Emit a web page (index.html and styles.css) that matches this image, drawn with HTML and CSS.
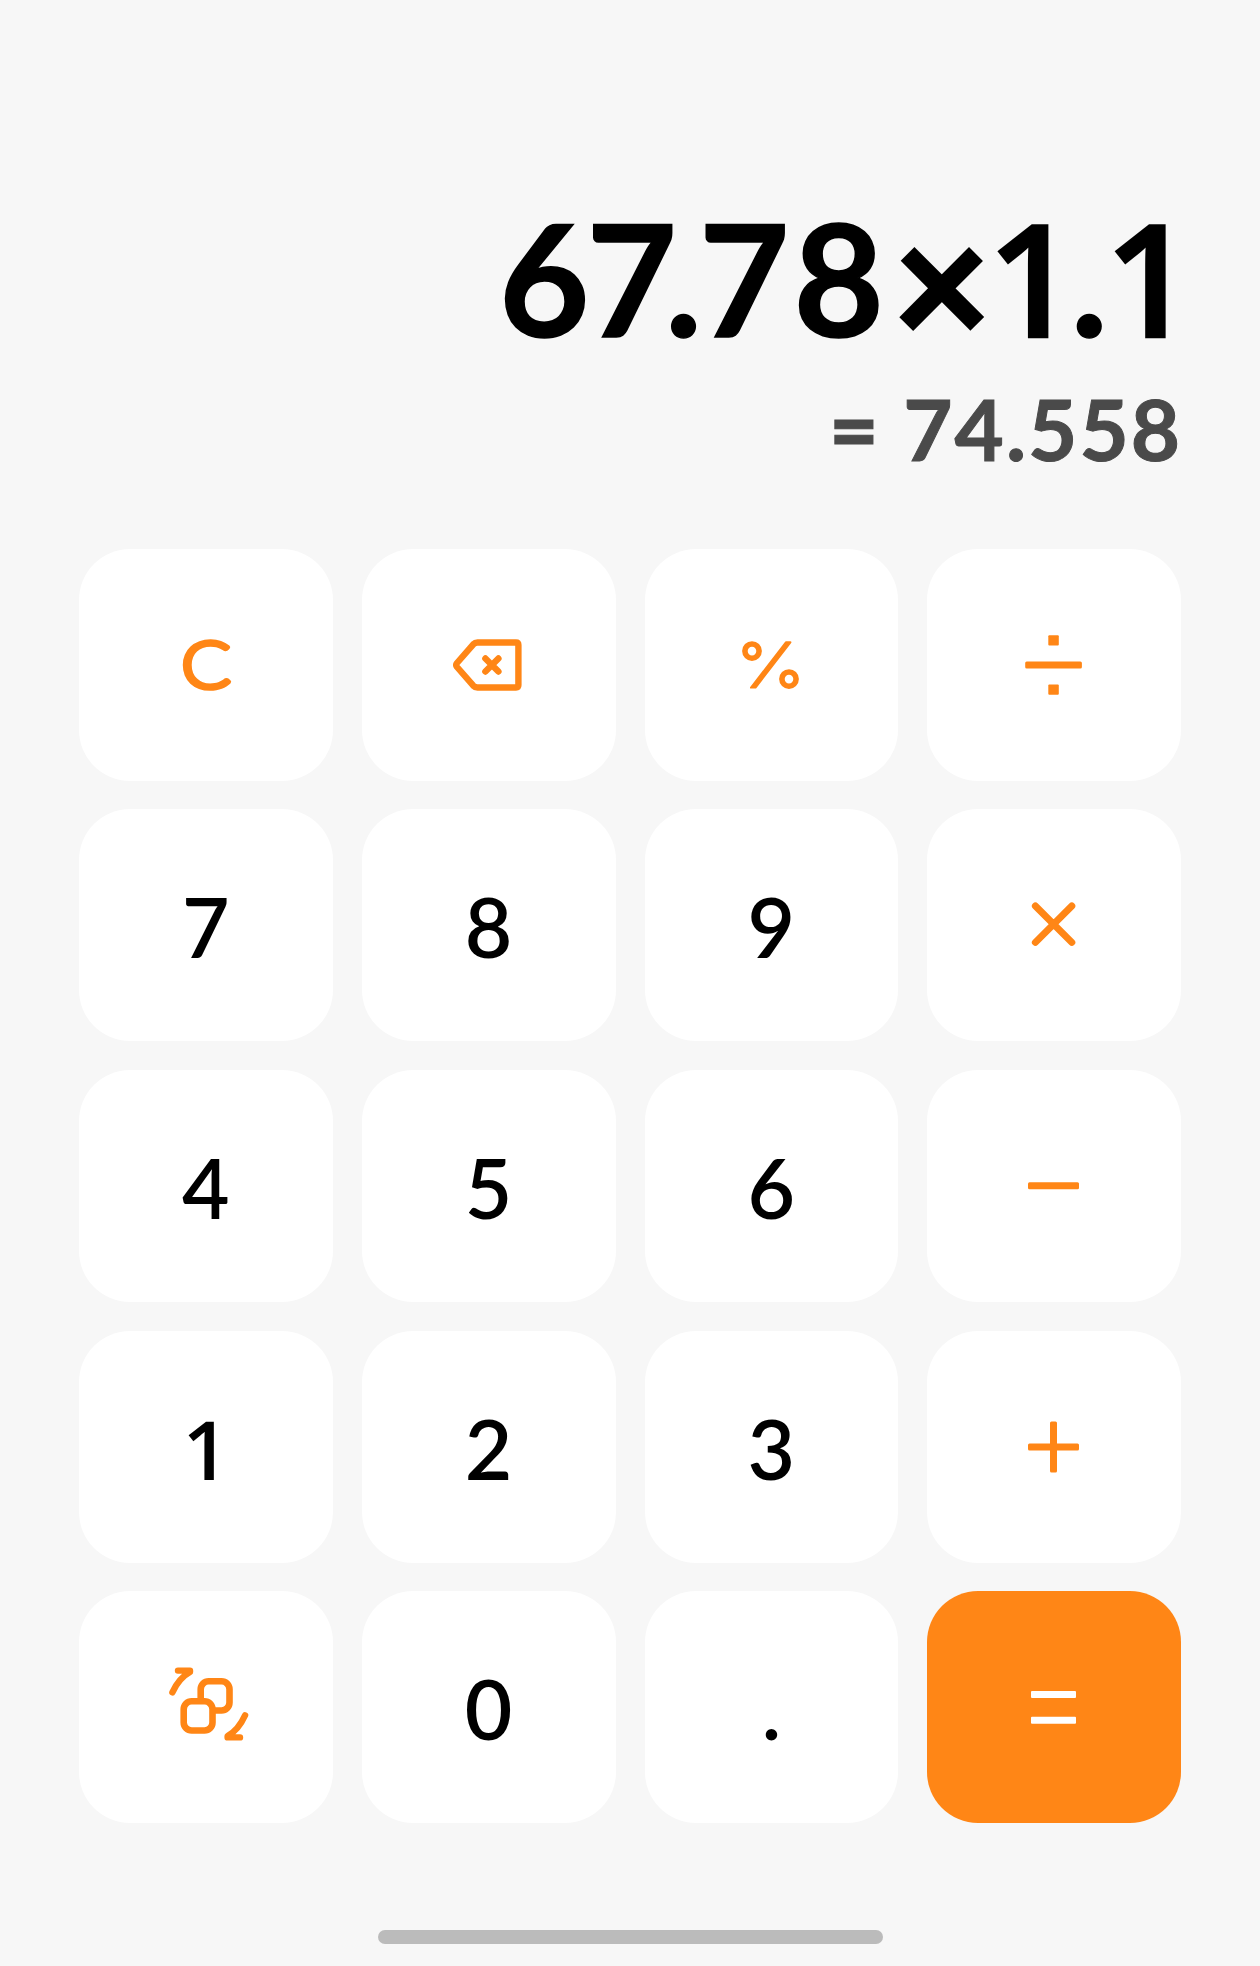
FILE: index.html
```html
<!DOCTYPE html>
<html lang="en">
<head>
    <meta charset="UTF-8">
    <meta name="viewport" content="width=device-width, initial-scale=1.0">
    <title>Calculator</title>
    <link rel="stylesheet" href="styles.css">
</head>
<body>
    <div class="calculator">
        <div class="display">
            <div class="expression">6<span class="tight">7</span>.<span class="loose">7</span>8<span class="times">×</span><span class="one">1</span>.<span class="one">1</span></div>
            <div class="result"><span class="equals">=</span> 74.558</div>
        </div>

        <div class="keypad">
            <button class="key" aria-label="Clear">
                <svg class="icon" viewBox="0 0 120 120">
                    <text class="clear" x="35" y="83" textLength="50" lengthAdjust="spacingAndGlyphs">C</text>
                </svg>
            </button>
            <button class="key" aria-label="Backspace">
                <svg class="icon line" viewBox="0 0 120 120">
                    <path d="M28 58L44.3 39.3Q46 37.5 48.5 37.5H87Q89.4 37.5 89.4 40V80Q89.4 82.5 87 82.5H48.5Q46 82.5 44.3 80.7L28 62Q26.4 60 28 58Z"/>
                    <path d="M56.4 53.5l13 13M69.4 53.5l-13 13"/>
                </svg>
            </button>
            <button class="key" aria-label="Percent">
                <svg class="icon" viewBox="0 0 120 120">
                    <circle class="ring" cx="41" cy="46.1" r="7.1"/>
                    <circle class="ring" cx="78" cy="74.1" r="7.1"/>
                    <path class="slash" d="M40 82.6H44.5L79.4 37.3H74.9Z"/>
                </svg>
            </button>
            <button class="key" aria-label="Divide">
                <svg class="icon" viewBox="0 0 120 120">
                    <rect x="54.3" y="30.2" width="10.5" height="10.3" rx="1"/>
                    <rect x="31.2" y="56.5" width="56.7" height="7" rx="1.5"/>
                    <rect x="54.3" y="79.5" width="10.5" height="10.3" rx="1"/>
                </svg>
            </button>

            <button class="key">7</button>
            <button class="key">8</button>
            <button class="key">9</button>
            <button class="key" aria-label="Multiply">
                <svg class="icon line thick" viewBox="0 0 120 120">
                    <path d="M41.4 41l36.4 36.4M77.8 41L41.4 77.4"/>
                </svg>
            </button>

            <button class="key">4</button>
            <button class="key">5</button>
            <button class="key">6</button>
            <button class="key" aria-label="Subtract">
                <svg class="icon" viewBox="0 0 120 120">
                    <rect x="34" y="56.2" width="51" height="7" rx="1.5"/>
                </svg>
            </button>

            <button class="key"><span class="one">1</span></button>
            <button class="key">2</button>
            <button class="key">3</button>
            <button class="key" aria-label="Add">
                <svg class="icon" viewBox="0 0 120 120">
                    <rect x="34" y="56.4" width="51" height="7" rx="1.5"/>
                    <rect x="56" y="34.4" width="7" height="51" rx="1.5"/>
                </svg>
            </button>

            <button class="key" aria-label="Convert">
                <svg class="icon line" viewBox="0 0 120 120">
                    <path d="M26.4 45.3Q33 31 44 25V23.6H32"/>
                    <rect class="tile" x="54.7" y="34.3" width="28.8" height="29.2" rx="8"/>
                    <rect class="tile" x="37.7" y="54.3" width="28.8" height="29.2" rx="8"/>
                    <path d="M99.1 68.3Q92.5 83 81.6 89V90.4H94"/>
                </svg>
            </button>
            <button class="key">0</button>
            <button class="key">.</button>
            <button class="key key-equals" aria-label="Equals">
                <svg class="icon" viewBox="0 0 120 120">
                    <rect x="37" y="44" width="45" height="7" rx="1"/>
                    <rect x="37" y="69.7" width="45" height="7" rx="1"/>
                </svg>
            </button>
        </div>

        <div class="home-bar"></div>
    </div>
</body>
</html>
```
FILE: styles.css
```css
body {
    font-family: Lato, "Open Sans", sans-serif;
    margin: 0;
    background-color: #f7f7f7;
    color: #000;
}

.calculator {
    box-sizing: border-box;
    width: 1260px;
    height: 1966px;
    padding: 0 79px 22px;
    display: flex;
    flex-direction: column;
}

.display {
    box-sizing: border-box;
    height: 548.5px;
    padding-top: 183px;
    text-align: right;
    white-space: nowrap;
}

.expression {
    height: 188px;
    font-size: 156px;
    font-weight: 700;
    line-height: 188px;
    letter-spacing: -3px;
    margin-right: -7px;
    -webkit-text-stroke: 1.5px #000;
}

.expression .one {
    letter-spacing: -6px;
    -webkit-text-stroke: 2.5px #000;
}

.tight {
    letter-spacing: -12px;
}

.loose {
    letter-spacing: 4px;
}

.times {
    font-size: 168px;
    line-height: 1;
    margin: 0 0 0 12px;
    vertical-align: -8px;
    -webkit-text-stroke: 4px #000;
}

.result {
    font-size: 85px;
    font-weight: 700;
    line-height: 102px;
    letter-spacing: 2px;
    margin-top: 6px;
    margin-right: -1px;
    color: #4a4a4a;
    -webkit-text-stroke: 1px #4a4a4a;
}

.equals {
    font-weight: 900;
}

/* plain figure one, without a foot */
.one {
    font-family: "Open Sans", sans-serif;
    font-weight: 600;
}

.keypad {
    display: grid;
    grid-template-columns: repeat(4, 1fr);
    grid-auto-rows: 232px;
    gap: 28.7px 29px;
}

.key {
    display: flex;
    align-items: center;
    justify-content: center;
    padding: 2px 0 0;
    border: none;
    border-radius: 51px;
    background-color: #fff;
    color: #000;
    font-family: inherit;
    font-size: 82px;
    font-weight: 600;
    line-height: 98px;
    cursor: pointer;
}

.key-equals {
    background-color: #ff8616;
}

.icon {
    width: 120px;
    height: 120px;
    margin-top: -2px;
    fill: #ff8616;
}

.key-equals .icon {
    fill: #fff;
}

.line {
    fill: none;
    stroke: #ff8616;
    stroke-width: 6.4;
    stroke-linecap: round;
    stroke-linejoin: round;
}

.thick {
    stroke-width: 7;
}

.tile {
    fill: #fff;
    stroke-width: 6.6;
}

.ring {
    fill: none;
    stroke: #ff8616;
    stroke-width: 5.6;
}

.slash {
    stroke: #ff8616;
    stroke-width: 2;
    stroke-linejoin: round;
}

.clear {
    font-family: Lato, sans-serif;
    font-size: 66px;
    font-weight: 300;
    stroke: #ff8616;
    stroke-width: 4.5;
    stroke-linejoin: round;
}

.home-bar {
    width: 505px;
    height: 14px;
    margin: auto auto 0;
    border-radius: 7px;
    background-color: #bbb;
}
```
